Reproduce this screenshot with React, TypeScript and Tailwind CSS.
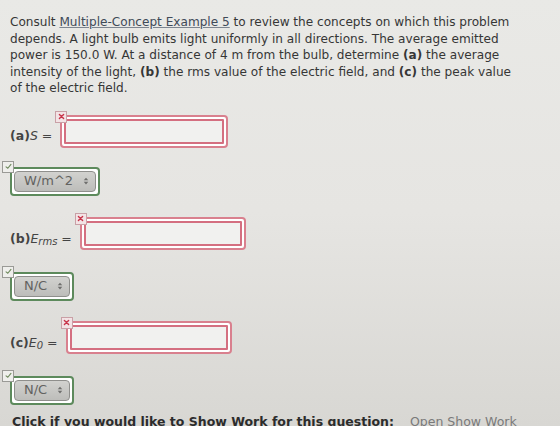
import React from 'react';

// Small status badges that sit on the corner of each answer field
const WrongMark: React.FC = () => (
  <div className="absolute -left-[5px] -top-[4px] z-10 flex h-[12px] w-[12px] items-center justify-center border border-[#c9a0a6] bg-[#f3e3e5]">
    <svg viewBox="0 0 10 10" className="h-[7px] w-[7px]">
      <path d="M2 2 L8 8 M8 2 L2 8" stroke="#c8344a" strokeWidth="2" strokeLinecap="round" />
    </svg>
  </div>
);

const RightMark: React.FC = () => (
  <div className="absolute -left-[8px] -top-[6px] z-10 flex h-[12px] w-[12px] items-center justify-center border border-[#9a9a96] bg-[#efefec]">
    <svg viewBox="0 0 10 10" className="h-[7px] w-[7px]">
      <path d="M1.5 5.5 L4 7.5 L8.5 2" stroke="#6f8a5e" strokeWidth="1.6" fill="none" strokeLinecap="round" />
    </svg>
  </div>
);

const AnswerBox: React.FC<{ width: number }> = ({ width }) => (
  <div className="relative" style={{ width }}>
    <WrongMark />
    <div className="h-[33px] rounded-[4px] border-2 border-[#d9808e] bg-white p-[2px]">
      <div className="h-full w-full rounded-[1px] border-2 border-[#d46f80] bg-[#f1f1ef]" />
    </div>
  </div>
);

const UnitSelect: React.FC<{ unit: string; width: number }> = ({ unit, width }) => (
  <div className="relative" style={{ width }}>
    <RightMark />
    <div className="h-[29px] rounded-[4px] border-2 border-[#5d8a5c] bg-white p-[2px]">
      <div className="flex h-full items-center justify-between rounded-[4px] border border-[#8f8f8c] bg-linear-to-b from-[#d2d2cf] to-[#bdbdba] pl-[9px] pr-[6px] text-[13px] text-[#626260]">
        <span>{unit}</span>
        <svg viewBox="0 0 8 12" className="h-[10px] w-[6px]">
          <path d="M1 5 L4 1.5 L7 5 Z M1 7 L4 10.5 L7 7 Z" fill="#6e6e6c" />
        </svg>
      </div>
    </div>
  </div>
);

export default function App() {
  return (
    <div
      className="h-[426px] w-[560px] overflow-hidden bg-linear-to-b from-[#e9e9e6] via-[#e6e5e2] to-[#d8d7d3] pl-[10px] pt-[14px] text-[#363636]"
      style={{ fontFamily: '"DejaVu Sans", Verdana, sans-serif' }}
    >
      <div className="text-[12.1px] leading-[16.5px] whitespace-nowrap">
        <div>
          Consult <span className="text-[#3f4a58] underline decoration-[#7d8590]">Multiple-Concept Example 5</span> to review the concepts on which this problem
        </div>
        <div>depends. A light bulb emits light uniformly in all directions. The average emitted</div>
        <div>
          power is 150.0 W. At a distance of 4 m from the bulb, determine <b>(a)</b> the average
        </div>
        <div>
          intensity of the light, <b>(b)</b> the rms value of the electric field, and <b>(c)</b> the peak value
        </div>
        <div>of the electric field.</div>
      </div>

      {/* (a) intensity */}
      <div className="mt-[18px] flex items-end gap-[8px]">
        <span className="mb-[2px] text-[12.5px] text-[#444]">
          <b>(a)</b>
          <i>S</i> =
        </span>
        <AnswerBox width={168} />
      </div>
      <div className="mt-[19px]">
        <UnitSelect unit="W/m^2" width={90} />
      </div>

      {/* (b) rms field */}
      <div className="mt-[21px] flex items-end gap-[8px]">
        <span className="mb-[1px] text-[12.5px] text-[#444]">
          <b>(b)</b>
          <i>E</i>
          <sub className="text-[10px] italic">rms</sub> =
        </span>
        <AnswerBox width={166} />
      </div>
      <div className="mt-[22px]">
        <UnitSelect unit="N/C" width={64} />
      </div>

      {/* (c) peak field */}
      <div className="mt-[20px] flex items-end gap-[8px]">
        <span className="mb-[1px] text-[12.5px] text-[#444]">
          <b>(c)</b>
          <i>E</i>
          <sub className="text-[10px] italic">0</sub> =
        </span>
        <AnswerBox width={166} />
      </div>
      <div className="mt-[22px]">
        <UnitSelect unit="N/C" width={64} />
      </div>

      <div className="mt-[9px] whitespace-nowrap pl-[2px] text-[12.5px] leading-[15px]">
        <b className="text-[#2c2c2c]">Click if you would like to Show Work for this question:</b>
        <span className="ml-[16px] text-[#7a7a7a]">Open Show Work</span>
      </div>
    </div>
  );
}
